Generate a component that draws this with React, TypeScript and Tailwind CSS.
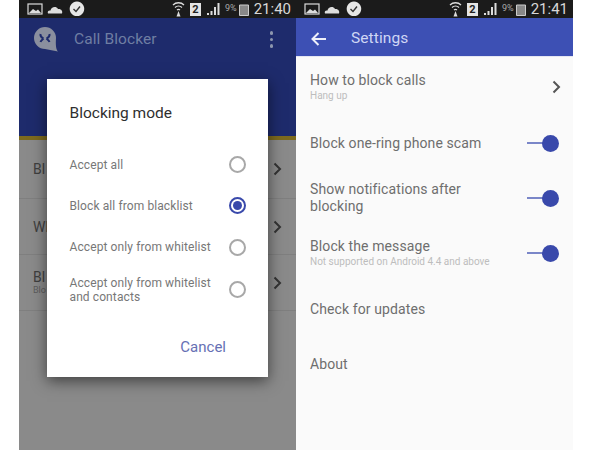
import React from "react";

const font = { fontFamily: "Roboto, sans-serif" };

function StatusBar({ time }: { time: string }) {
  return (
    <div className="h-[18px] bg-[#1b1b1b] flex items-center pl-2 pr-[5px] text-[#d8d8d8] shrink-0">
      <svg width="16" height="12" viewBox="0 0 16 12" className="mr-[4px]">
        <rect x="1" y="1" width="14" height="10" fill="none" stroke="#ddd" strokeWidth="1.2" />
        <path d="M2 10 L6 6 L9 8 L11 6.5 L14 10 Z" fill="#ddd" />
      </svg>
      <svg width="16" height="9" viewBox="0 0 16 9" className="mr-[6px]">
        <path d="M1 8.5 C0 6 2 5 3.5 5.5 C4 2 9 0.5 11 4 C14 3.5 16 6 15 8.5 Z" fill="#ddd" />
      </svg>
      <svg width="16" height="16" viewBox="0 0 16 16">
        <path d="M8 0.5 A7.3 7.3 0 1 1 7.9 0.5 Z" fill="#e6e6e6" />
        <path d="M4.5 8 L7 10.5 L11 5.5" fill="none" stroke="#333" strokeWidth="1.4" />
      </svg>
      <div className="flex-1" />
      <svg width="13" height="16" viewBox="0 0 13 16" className="mr-[5px]">
        <path d="M1 4 C4 1 9 1 12 4 M3 6.5 C5 4.7 8 4.7 10 6.5 M5 9 C6 8.2 7 8.2 8 9" fill="none" stroke="#ddd" strokeWidth="1.3" />
        <path d="M4.5 15.5 L6.5 10 L8.5 15.5 Z" fill="#ddd" />
      </svg>
      <span className="w-[11px] h-[13px] bg-[#e4e4e4] text-[#222] text-[11px] leading-[13px] font-bold text-center mr-[6px]">2</span>
      <svg width="13" height="12" viewBox="0 0 13 12" className="mr-[5px]">
        <path d="M0 10h2v2H0zM3.5 8h2v4h-2zM7 4h2v8H7zM10.5 0h2v12h-2z" fill="#ddd" />
      </svg>
      <span className="text-[9px] text-[#aaa] mr-[2px]">9%</span>
      <svg width="10" height="13" viewBox="0 0 10 13" className="mr-[5px]">
        <path d="M0.5 2h9v10.5h-9z" fill="#888" stroke="#ccc" />
      </svg>
      <span className="text-[15px] leading-[18px]">{time}</span>
    </div>
  );
}

function Chevron({ color }: { color: string }) {
  return (
    <svg width="9" height="14" viewBox="0 0 9 14">
      <path d="M1.5 1.5 L7 7 L1.5 12.5" fill="none" stroke={color} strokeWidth="2" />
    </svg>
  );
}

function Toggle() {
  return (
    <div className="flex items-center w-[32px] shrink-0">
      <div className="w-[16px] h-[2px] bg-[#7a86c8]" />
      <div className="w-[17px] h-[17px] rounded-full bg-[#3949ab] -ml-[1px]" />
    </div>
  );
}

function GrayRow({ title, sub, h }: { title: string; sub?: string; h: string }) {
  return (
    <div className={`${h} border-b border-[#7f7f7f] flex items-center justify-between pl-[14px] pr-[14px]`}>
      <div className="whitespace-nowrap">
        <div className="text-[14px] leading-[16px] text-[#3f3f3f]">{title}</div>
        {sub && <div className="text-[9px] leading-[11px] text-[#5c5c5c]">{sub}</div>}
      </div>
      <Chevron color="#333333" />
    </div>
  );
}

function Radio({ label, selected, h }: { label: React.ReactNode; selected?: boolean; h: string }) {
  return (
    <div className={`${h} flex items-center justify-between pl-[22.5px] pr-[22px]`}>
      <div className="text-[12px] leading-[14px] tracking-[0.1px] text-[#777]">{label}</div>
      {selected ? (
        <div className="w-[17px] h-[17px] rounded-full border-2 border-[#3949ab] flex items-center justify-center shrink-0">
          <div className="w-[9px] h-[9px] rounded-full bg-[#3949ab]" />
        </div>
      ) : (
        <div className="w-[17px] h-[17px] rounded-full border-2 border-[#a8a8a8] shrink-0" />
      )}
    </div>
  );
}

function SettingRow({ h, title, sub, right }: { h: string; title: React.ReactNode; sub?: string; right?: React.ReactNode }) {
  return (
    <div className={`${h} flex items-center pl-[14px] pr-[14px]`}>
      <div className="flex-1 min-w-0">
        <div className="text-[14px] leading-[17px] tracking-[0.1px] text-[#6e6e6e]">{title}</div>
        {sub && <div className="text-[10px] leading-[12px] mt-[1px] text-[#bdbdbd]">{sub}</div>}
      </div>
      {right}
    </div>
  );
}

export default function App() {
  return (
    <div className="w-[600px] h-[450px] bg-white flex overflow-hidden" style={font}>
      <div className="w-[19px] shrink-0" />

      <div className="w-[277px] h-full relative flex flex-col bg-[#8a8a8a] shrink-0">
        <StatusBar time="21:40" />
        <div className="h-[118px] bg-[#1e2b6c] flex items-start pl-[14px] pr-[23px] pt-[8px]">
          <svg width="26" height="26" viewBox="0 0 26 26" className="mr-[15px]">
            <path d="M12 1 A11 11 0 1 0 12 23 L25 25.5 C23 23.5 22.5 19 23 12 A11 11 0 0 0 12 1 Z" fill="#8a8f9e" />
            <path d="M7.5 8 C7 11 9.5 12 10.5 12.5 M7.5 16 C8 14.5 9.5 13.5 10.5 12.5 M16.5 8 C17 11 14.5 12 13.5 12.5 M16.5 16 C16 14.5 14.5 13.5 13.5 12.5" fill="none" stroke="#1e2b6c" strokeWidth="2" />
          </svg>
          <span className="text-[15.5px] leading-[26px] tracking-[0.1px] text-[#6f7ea3]">Call Blocker</span>
          <div className="flex-1" />
          <div className="flex flex-col gap-[3px] pt-[5px]">
            <div className="w-[3.5px] h-[3.5px] rounded-full bg-[#8c96ae]" />
            <div className="w-[3.5px] h-[3.5px] rounded-full bg-[#8c96ae]" />
            <div className="w-[3.5px] h-[3.5px] rounded-full bg-[#8c96ae]" />
          </div>
        </div>
        <div className="h-[4px] bg-[#7d6a1e]" />
        <GrayRow h="h-[59px]" title="Bl" />
        <GrayRow h="h-[56px]" title="Wl" />
        <GrayRow h="h-[56px]" title="Bl" sub="Blo" />

        <div className="absolute left-[28px] top-[79px] w-[221px] h-[298px] bg-white shadow-[0_4px_14px_rgba(0,0,0,0.55)] flex flex-col">
          <div className="pl-[22.5px] pt-[25px] h-[65px] text-[15.5px] leading-[19px] text-[#2f2f2f]">Blocking mode</div>
          <Radio h="h-[41px]" label="Accept all" />
          <Radio h="h-[41px]" label="Block all from blacklist" selected />
          <Radio h="h-[42px]" label="Accept only from whitelist" />
          <Radio
            h="h-[43px]"
            label={
              <>
                Accept only from whitelist
                <br />
                and contacts
              </>
            }
          />
          <div className="flex justify-end pr-[42px] pt-[27px] text-[15px] leading-[18px] text-[#6670b4]">Cancel</div>
        </div>
      </div>

      <div className="w-[277px] h-full flex flex-col bg-[#fafafa] shrink-0">
        <StatusBar time="21:41" />
        <div className="h-[39px] bg-[#3d50b4] flex items-center pl-[15px] pt-[4px] border-b border-[#e4e6f2]">
          <svg width="16" height="14" viewBox="0 0 16 14" className="mr-[24px]">
            <path d="M15 7 H2 M7.5 1 L1.5 7 L7.5 13" fill="none" stroke="#eef0fa" strokeWidth="2" />
          </svg>
          <span className="text-[15.5px] tracking-[0.1px] text-[#cfd6f4]">Settings</span>
        </div>
        <SettingRow h="h-[60px]" title="How to block calls" sub="Hang up" right={<div className="-mr-[2px]"><Chevron color="#555555" /></div>} />
        <SettingRow h="h-[52px]" title="Block one-ring phone scam" right={<Toggle />} />
        <SettingRow h="h-[58px]" title={<>Show notifications after<br />blocking</>} right={<Toggle />} />
        <SettingRow h="h-[52px]" title="Block the message" sub="Not supported on Android 4.4 and above" right={<Toggle />} />
        <SettingRow h="h-[60px]" title="Check for updates" />
        <SettingRow h="h-[50px]" title="About" />
      </div>
    </div>
  );
}
